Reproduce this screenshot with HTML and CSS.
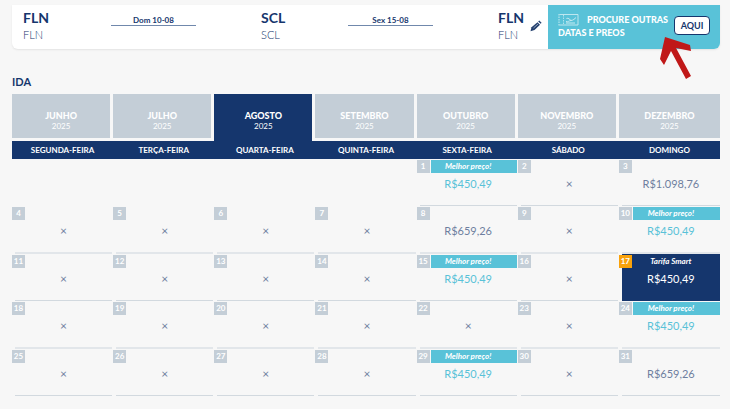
FILE: index.html
```
<!DOCTYPE html>
<html lang="pt-BR">
<head>
<meta charset="utf-8">
<meta name="viewport" content="width=device-width, initial-scale=1">
<title>Ida</title>
<link rel="stylesheet" href="styles.css">
</head>
<body>
<header class="trip">
  <div class="route">
    <div class="place"><strong>FLN</strong><span>FLN</span></div>
    <div class="leg">Dom 10-08</div>
    <div class="place stop"><strong>SCL</strong><span>SCL</span></div>
    <div class="leg">Sex 15-08</div>
    <div class="place end"><strong>FLN</strong><span>FLN</span></div>
    <button class="edit" type="button" aria-label="Editar">
      <svg viewBox="0 0 12 12" width="12" height="12"><path d="M.5 11.200l1-4 6-5 2.500 2.500L4.500 10z" fill="#24406f"/><path d="M8.200 1.400l1-1 2.400 2.400-1 1z" fill="#24406f"/><path d="M3.500 8l4.500-4" stroke="#b5c1d3" stroke-width=".8"/></svg>
    </button>
  </div>
  <div class="search">
    <p><svg class="ticket" viewBox="0 0 21 12" width="21" height="12" fill="none" stroke="#c8ebf2"><path d="M1.500.5h18.500v10.500H1.500" stroke-width=".9"/><path d="M1 0v11.500" stroke-dasharray="1.500 1"/><path d="M5.500 1v10" stroke-dasharray="1.500 1" stroke-width=".8"/><path d="M8 7.500c2 1 3-1 5-1s4-2 5-3M8.500 4.500c2-1 3 1 4.500 2M8 9h9" stroke-width="1"/></svg>PROCURE OUTRAS DATAS E PREOS</p>
    <button class="here" type="button">AQUI</button>
    <svg class="arrow" viewBox="0 0 32 43" width="32" height="43" aria-hidden="true"><path d="M5 0l25 8 1 6-15-3 15 28-5 3L11 14 4 28 0 22z" fill="#c01818"/></svg>
  </div>
</header>

<main>
  <h1>IDA</h1>
  <nav class="months">
    <button type="button"><strong>JUNHO</strong>2025</button>
    <button type="button"><strong>JULHO</strong>2025</button>
    <button type="button" class="current"><strong>AGOSTO</strong>2025</button>
    <button type="button"><strong>SETEMBRO</strong>2025</button>
    <button type="button"><strong>OUTUBRO</strong>2025</button>
    <button type="button"><strong>NOVEMBRO</strong>2025</button>
    <button type="button"><strong>DEZEMBRO</strong>2025</button>
  </nav>
  <table>
    <thead>
      <tr><th>SEGUNDA-FEIRA</th><th>TERÇA-FEIRA</th><th>QUARTA-FEIRA</th><th>QUINTA-FEIRA</th><th>SEXTA-FEIRA</th><th>SÁBADO</th><th>DOMINGO</th></tr>
    </thead>
    <tbody>
      <tr>
        <td></td><td></td><td></td><td></td>
        <td><div class="day best"><b>1</b><em>Melhor preço!</em><span>R$450,49</span></div></td>
        <td><div class="day none"><b>2</b><span>×</span></div></td>
        <td><div class="day"><b>3</b><span>R$1.098,76</span></div></td>
      </tr>
      <tr>
        <td><div class="day none"><b>4</b><span>×</span></div></td>
        <td><div class="day none"><b>5</b><span>×</span></div></td>
        <td><div class="day none"><b>6</b><span>×</span></div></td>
        <td><div class="day none"><b>7</b><span>×</span></div></td>
        <td><div class="day"><b>8</b><span>R$659,26</span></div></td>
        <td><div class="day none"><b>9</b><span>×</span></div></td>
        <td><div class="day best"><b>10</b><em>Melhor preço!</em><span>R$450,49</span></div></td>
      </tr>
      <tr>
        <td><div class="day none"><b>11</b><span>×</span></div></td>
        <td><div class="day none"><b>12</b><span>×</span></div></td>
        <td><div class="day none"><b>13</b><span>×</span></div></td>
        <td><div class="day none"><b>14</b><span>×</span></div></td>
        <td><div class="day best"><b>15</b><em>Melhor preço!</em><span>R$450,49</span></div></td>
        <td><div class="day none"><b>16</b><span>×</span></div></td>
        <td><div class="day selected"><b>17</b><em>Tarifa Smart</em><span>R$450,49</span></div></td>
      </tr>
      <tr>
        <td><div class="day none"><b>18</b><span>×</span></div></td>
        <td><div class="day none"><b>19</b><span>×</span></div></td>
        <td><div class="day none"><b>20</b><span>×</span></div></td>
        <td><div class="day none"><b>21</b><span>×</span></div></td>
        <td><div class="day none"><b>22</b><span>×</span></div></td>
        <td><div class="day none"><b>23</b><span>×</span></div></td>
        <td><div class="day best"><b>24</b><em>Melhor preço!</em><span>R$450,49</span></div></td>
      </tr>
      <tr>
        <td><div class="day none"><b>25</b><span>×</span></div></td>
        <td><div class="day none"><b>26</b><span>×</span></div></td>
        <td><div class="day none"><b>27</b><span>×</span></div></td>
        <td><div class="day none"><b>28</b><span>×</span></div></td>
        <td><div class="day best"><b>29</b><em>Melhor preço!</em><span>R$450,49</span></div></td>
        <td><div class="day none"><b>30</b><span>×</span></div></td>
        <td><div class="day"><b>31</b><span>R$659,26</span></div></td>
      </tr>
    </tbody>
  </table>
</main>
</body>
</html>
```
FILE: styles.css
```
:root {
  --navy: #15366d;
  --teal: #59c2d8;
  --grey: #c4ced7;
  --page: #f7f7f7;
}

* { box-sizing: border-box; }

body {
  margin: 0;
  padding: 5px 10px 0 12px;
  background: var(--page);
  color: var(--navy);
  font-family: Lato, "Liberation Sans", sans-serif;
  font-size: 9px;
}

button {
  margin: 0;
  padding: 0;
  border: 0;
  background: none;
  color: inherit;
  font: inherit;
}

.trip {
  display: flex;
  height: 44px;
  border-radius: 0 0 6px 6px;
  background: #fff;
  box-shadow: 0 1px 2px #e3e3e3;
}

.route {
  flex: 1;
  display: grid;
  grid-template-columns: 88fr 85fr 65fr 87fr 85fr 65fr 32fr 18fr;
  padding: 4px 0 0 11px;
}

.place strong,
.place span {
  display: block;
  line-height: 17px;
}

.place strong { font-size: 14px; font-weight: 700; }
.place span { font-size: 11px; font-weight: 300; }
.stop { grid-column: 4; }
.end { grid-column: 7; }

.leg {
  height: 17px;
  border-bottom: 1px solid #7088ac;
  font-size: 8px;
  font-weight: 700;
  line-height: 22px;
  text-align: center;
}

.edit { align-self: start; padding-top: 11px; text-align: left; }

.search {
  position: relative;
  display: flex;
  width: 172px;
  padding: 8px 10px 0;
  border-radius: 0 0 6px 0;
  background: var(--teal);
}

.search p {
  flex: 1;
  margin: 0;
  color: #fff;
  font-size: 9px;
  font-weight: 900;
  line-height: 13px;
}

.ticket { margin-right: 8px; vertical-align: text-top; }

.here {
  width: 36px;
  height: 19px;
  margin-top: 3px;
  border: 1px solid var(--navy);
  border-radius: 4px;
  background: #fff;
  font-weight: 700;
}

.arrow { position: absolute; top: 32px; right: 28px; }

h1 {
  margin: 25px 0 4px;
  font-size: 11px;
  font-weight: 700;
  line-height: 16px;
}

.months {
  display: grid;
  grid-template-columns: repeat(7, 1fr);
  height: 47px;
}

.months button {
  margin: 0 3px 3px 0;
  padding-top: 10px;
  background: var(--grey);
  color: #fff;
  font-size: 8px;
  line-height: 11px;
}

.months button:last-child { margin-right: 0; }
.months .current { margin-bottom: 0; padding-bottom: 3px; background: var(--navy); }
.months strong { display: block; font-size: 9px; font-weight: 900; }

table {
  width: 100%;
  border-collapse: collapse;
  table-layout: fixed;
}

th {
  height: 18px;
  padding: 0;
  background: var(--navy);
  color: #fff;
  font-size: 8px;
  font-weight: 700;
}

td { height: 47px; padding: 0; }
tr:nth-child(even) td { height: 48px; }

.day {
  position: relative;
  height: 47px;
  margin: 0 1px 0 3px;
  padding-top: 1px;
  border-bottom: 1px solid #d2d9df;
  color: #6f7f9f;
  text-align: center;
}

tr:nth-child(even) .day { height: 48px; border-bottom: 2px solid #e2e6ea; }
td:last-child .day { margin-right: 0; }

.day b {
  position: absolute;
  top: 1px;
  left: -3px;
  width: 13px;
  height: 13px;
  background: var(--grey);
  color: #fff;
  font-size: 8px;
  line-height: 13px;
}

.day em {
  display: block;
  height: 13px;
  color: #fff;
  font-size: 8px;
  font-weight: 700;
  line-height: 13px;
}

.day span {
  display: block;
  font-size: 11px;
  line-height: 22px;
}

.day b + span { padding-top: 13px; }
.day.none span { font-size: 12px; }
.best { color: var(--teal); }
.best em { background: var(--teal); }
.best b { box-shadow: 1px 0 var(--page); }
.selected { border-color: var(--navy); background: var(--navy); color: #fff; }
.selected b { background: #f9a20b; }
```
